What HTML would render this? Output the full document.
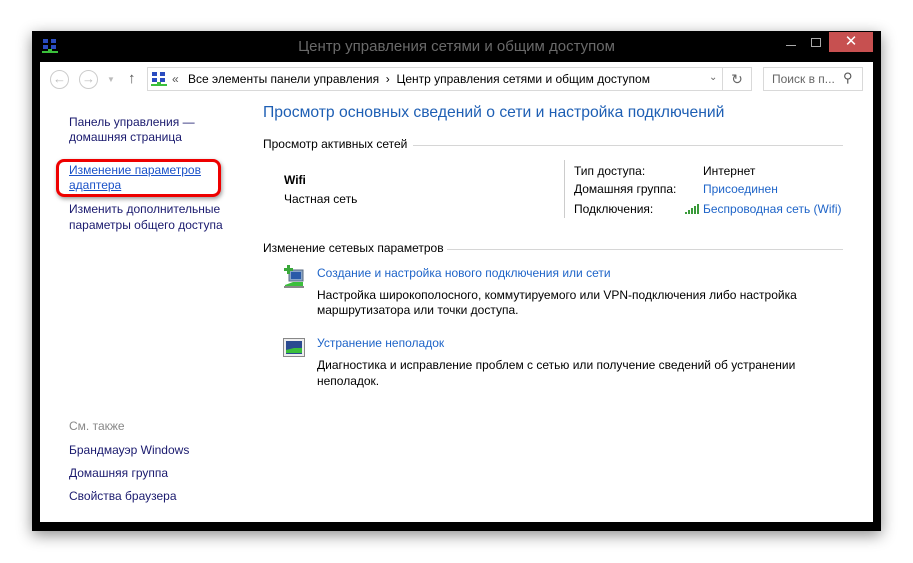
<!DOCTYPE html>
<html><head><meta charset="utf-8"><style>
*{margin:0;padding:0;box-sizing:border-box}
body{width:913px;height:563px;background:#fff;position:relative;overflow:hidden;font-family:"Liberation Sans","Noto Sans CJK SC",sans-serif;font-size:12px;color:#000}
.a{position:absolute;white-space:nowrap}
.win{position:absolute;left:32px;top:31px;width:849px;height:500px;background:#000;box-shadow:0 4px 14px rgba(0,0,0,.45)}
.in{position:absolute;left:40px;top:62px;width:833px;height:460px;background:#fff}
.nl{color:#1a1a6e}
.bl{color:#1e64c8}
.line{position:absolute;height:1px;background:#d6d6d6}
</style></head><body>
<div class="win"></div>
<div class="in"></div>
<svg class="a" style="left:42px;top:38px" width="16" height="16" viewBox="0 0 16 16"><rect x="1" y="1" width="5" height="4" fill="#2a4cc0"/><rect x="9" y="1" width="5" height="4" fill="#2a4cc0"/><rect x="1" y="7" width="5" height="4" fill="#2a4cc0"/><rect x="9" y="7" width="5" height="4" fill="#2a4cc0"/><rect x="0" y="13" width="16" height="2" fill="#3bbf3b"/><rect x="6" y="11" width="4" height="3" fill="#3bbf3b"/></svg>
<div class="a" style="left:0;width:913px;top:38px;text-align:center;color:#6a6a6a;font-size:15px">Центр управления сетями и общим доступом</div>
<div class="a" style="left:786px;top:45px;width:10px;height:1px;background:#aaa"></div>
<div class="a" style="left:811px;top:38px;width:10px;height:9px;border:1px solid #aaa"></div>
<div class="a" style="left:829px;top:32px;width:44px;height:20px;background:#c75050;color:#fff;text-align:center;font-size:15px;line-height:19px">✕</div>
<div class="a" style="left:50px;top:70px;width:19px;height:19px;border:1px solid #ccc;border-radius:50%;color:#bbb;text-align:center;line-height:16px;font-size:13px">←</div>
<div class="a" style="left:79px;top:70px;width:19px;height:19px;border:1px solid #ccc;border-radius:50%;color:#bbb;text-align:center;line-height:16px;font-size:13px">→</div>
<div class="a" style="left:107px;top:75px;color:#bbb;font-size:8px">▼</div>
<div class="a" style="left:128px;top:70px;color:#555;font-size:15px">↑</div>
<div class="a" style="left:147px;top:67px;width:576px;height:24px;border:1px solid #d9d9d9"></div>
<div class="a" style="left:722px;top:67px;width:30px;height:24px;border:1px solid #d9d9d9;color:#666;text-align:center;line-height:22px;font-size:14px">↻</div>
<svg class="a" style="left:151px;top:71px" width="16" height="16" viewBox="0 0 16 16"><rect x="1" y="1" width="5" height="4" fill="#2a4cc0"/><rect x="9" y="1" width="5" height="4" fill="#2a4cc0"/><rect x="1" y="7" width="5" height="4" fill="#2a4cc0"/><rect x="9" y="7" width="5" height="4" fill="#2a4cc0"/><rect x="0" y="13" width="16" height="2" fill="#3bbf3b"/><rect x="6" y="11" width="4" height="3" fill="#3bbf3b"/></svg>
<div class="a" style="left:172px;top:72px;color:#555">«</div>
<div class="a" style="left:188px;top:72px">Все элементы панели управления&nbsp;&nbsp;›&nbsp;&nbsp;Центр управления сетями и общим доступом</div>
<div class="a" style="left:709px;top:72px;color:#666;font-size:10px">⌄</div>
<div class="a" style="left:763px;top:67px;width:100px;height:24px;border:1px solid #d9d9d9"></div>
<div class="a" style="left:772px;top:72px;color:#666">Поиск в п...</div>
<div class="a" style="left:843px;top:70px;color:#555;font-size:13px">⚲</div>
<div class="a nl" style="left:69px;top:115px;line-height:15px">Панель управления —<br>домашняя страница</div>
<div class="a" style="left:56px;top:159px;width:165px;height:38px;border:3px solid #e00;border-radius:8px;box-shadow:1px 2px 4px rgba(0,0,0,.4)"></div>
<div class="a bl" style="left:69px;top:163px;line-height:15px;text-decoration:underline;color:#1a52c8">Изменение параметров<br>адаптера</div>
<div class="a nl" style="left:69px;top:201px;line-height:16px">Изменить дополнительные<br>параметры общего доступа</div>
<div class="a" style="left:69px;top:419px;color:#888">См. также</div>
<div class="a nl" style="left:69px;top:443px">Брандмауэр Windows</div>
<div class="a nl" style="left:69px;top:466px">Домашняя группа</div>
<div class="a nl" style="left:69px;top:489px">Свойства браузера</div>
<div class="a" style="left:263px;top:104px;font-size:15.7px;color:#1e5fb4">Просмотр основных сведений о сети и настройка подключений</div>
<div class="a" style="left:263px;top:137px">Просмотр активных сетей</div>
<div class="line" style="left:413px;top:145px;width:430px"></div>
<div class="a" style="left:284px;top:173px;font-weight:bold">Wifi</div>
<div class="a" style="left:284px;top:192px">Частная сеть</div>
<div class="a" style="left:564px;top:160px;width:1px;height:58px;background:#ccc"></div>
<div class="a" style="left:574px;top:164px">Тип доступа:</div>
<div class="a" style="left:703px;top:164px">Интернет</div>
<div class="a" style="left:574px;top:182px">Домашняя группа:</div>
<div class="a bl" style="left:703px;top:182px">Присоединен</div>
<div class="a" style="left:574px;top:202px">Подключения:</div>
<svg class="a" style="left:685px;top:204px" width="14" height="10"><rect x="0" y="8" width="2" height="2" fill="#3a9a3a"/><rect x="3" y="6" width="2" height="4" fill="#3a9a3a"/><rect x="6" y="4" width="2" height="6" fill="#3a9a3a"/><rect x="9" y="2" width="2" height="8" fill="#3a9a3a"/><rect x="12" y="0" width="2" height="10" fill="#3a9a3a"/></svg>
<div class="a bl" style="left:703px;top:202px">Беспроводная сеть (Wifi)</div>
<div class="a" style="left:263px;top:241px">Изменение сетевых параметров</div>
<div class="line" style="left:447px;top:249px;width:396px"></div>
<svg class="a" style="left:283px;top:265px" width="22" height="24" viewBox="0 0 22 24"><rect x="6" y="5" width="14" height="11" fill="#8aa6c8" stroke="#5a6a80"/><rect x="8" y="7" width="10" height="7" fill="#2a5aa8"/><path d="M4 0h3v3h3v3H7v3H4V6H1V3h3z" fill="#3aa83a"/><path d="M2 20l8-3h10v4H2z" fill="#3bbf3b"/><rect x="1" y="21" width="20" height="2" fill="#888"/></svg>
<div class="a bl" style="left:317px;top:266px">Создание и настройка нового подключения или сети</div>
<div class="a" style="left:317px;top:288px;line-height:15px">Настройка широкополосного, коммутируемого или VPN-подключения либо настройка<br>маршрутизатора или точки доступа.</div>
<svg class="a" style="left:283px;top:338px" width="22" height="20" viewBox="0 0 22 20"><rect x="0.5" y="0.5" width="21" height="18" fill="#eee" stroke="#888"/><rect x="3" y="3" width="16" height="13" fill="#2a4a90"/><path d="M3 12l8-2h8v5H3z" fill="#3bbf3b"/></svg>
<div class="a bl" style="left:317px;top:336px">Устранение неполадок</div>
<div class="a" style="left:317px;top:357px;line-height:16px">Диагностика и исправление проблем с сетью или получение сведений об устранении<br>неполадок.</div>
</body></html>
